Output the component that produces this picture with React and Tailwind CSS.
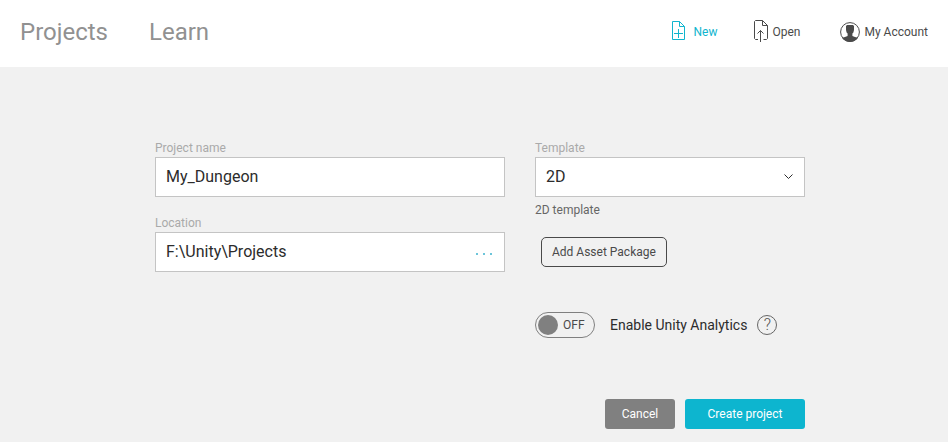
import { useState } from "react";

function NewIcon() {
  return (
    <svg width="15" height="21" viewBox="0 0 15 21" fill="none" stroke="currentColor" aria-hidden="true">
      <path d="M8.5 .5H1.5v18h12V5.500L8.500 .5v5h5M7.500 8v9M3 12.500h9" />
    </svg>
  );
}

function OpenIcon() {
  return (
    <svg width="15" height="23" viewBox="0 0 15 23" fill="none" stroke="currentColor" aria-hidden="true">
      <path d="M5 19.500H2.500L1.500 18.500V1.500L2.500 .5H9.500L14.500 5.500V18.500L13.500 19.500H10.500M9.500 .5V5.500H14.500M7.500 22V10.500M4.500 13.500L7.500 10.500L10.500 13.500" />
    </svg>
  );
}

function AccountIcon() {
  return (
    <svg width="20" height="20" viewBox="0 0 20 20" aria-hidden="true">
      <circle cx="10" cy="10" r="9.400" fill="none" stroke="currentColor" />
      <path
        fill="currentColor"
        d="M7 3h6l1 1v4l-.6 2.500-1 1V14l2.600 1 3 .8C16.500 18.300 13.500 20 10 20s-6.500-1.700-8-4.200l3-.8 2.600-1v-2.500l-1-1L6 8V4z"
      />
    </svg>
  );
}

function Field({ id, label, children }) {
  return (
    <div className="flex flex-col gap-px">
      <label htmlFor={id} className="text-xs text-[#aaaaaa]">
        {label}
      </label>
      {children}
    </div>
  );
}

export default function App() {
  const [name, setName] = useState("My_Dungeon");
  const [location, setLocation] = useState("F:\\Unity\\Projects");
  const [analytics, setAnalytics] = useState(false);

  return (
    <div className="flex min-h-screen flex-col bg-[#f1f1f1] font-['Roboto',sans-serif] text-[#4a4a4a]">
      <header className="flex h-[67px] items-center justify-between bg-white px-5 pb-1">
        <nav className="flex gap-[41px] text-2xl text-[#919191]">
          <a href="#projects">Projects</a>
          <a href="#learn">Learn</a>
        </nav>
        <div className="flex items-center text-xs">
          <button type="button" className="mr-9 flex items-center gap-2 text-[#11b5ce]">
            <NewIcon />
            New
          </button>
          <button type="button" className="mr-10 flex items-center gap-1">
            <OpenIcon />
            Open
          </button>
          <button type="button" className="flex items-center gap-1">
            <AccountIcon />
            My Account
          </button>
        </div>
      </header>

      <main className="flex grow justify-center pt-[73px] pl-3">
        <form className="w-[650px]" onSubmit={(e) => e.preventDefault()}>
          <div className="grid grid-cols-[350px_270px] gap-x-[30px]">
            <div className="flex flex-col gap-[18px]">
              <Field id="name" label="Project name">
                <input
                  id="name"
                  value={name}
                  onChange={(e) => setName(e.target.value)}
                  className="h-10 w-full border border-[#c4c4c4] bg-white px-2.5 pb-0.5 text-base text-[#2c2c2c]"
                />
              </Field>
              <Field id="location" label="Location">
                <div className="flex h-10 items-center border border-[#c4c4c4] bg-white">
                  <input
                    id="location"
                    value={location}
                    onChange={(e) => setLocation(e.target.value)}
                    className="h-full min-w-0 grow px-2.5 pb-0.5 text-base text-[#2c2c2c]"
                  />
                  <button type="button" aria-label="Browse" className="mr-3 flex gap-[5px] pt-1">
                    <span className="size-0.5 bg-[#6cc5da]" />
                    <span className="size-0.5 bg-[#6cc5da]" />
                    <span className="size-0.5 bg-[#6cc5da]" />
                  </button>
                </div>
              </Field>
            </div>

            <div className="flex flex-col items-start">
              <div className="w-full">
                <Field id="template" label="Template">
                  <div className="grid items-center">
                    <select
                      id="template"
                      className="col-start-1 row-start-1 h-10 w-full appearance-none border border-[#c4c4c4] bg-white px-2.5 text-base text-[#2c2c2c]"
                    >
                      <option>2D</option>
                    </select>
                    <svg
                      className="pointer-events-none col-start-1 row-start-1 mr-3 justify-self-end"
                      width="9"
                      height="6"
                      viewBox="0 0 9 6"
                      fill="none"
                      stroke="#2c2c2c"
                      aria-hidden="true"
                    >
                      <path d="M.5.500L4.500 4.500L8.500.500" />
                    </svg>
                  </div>
                </Field>
              </div>
              <p className="mt-[5px] text-xs text-[#666666]">2D template</p>
              <button
                type="button"
                className="mt-[19px] ml-1.5 h-[30px] rounded-[5px] border border-[#4a4a4a] px-2.5 text-xs"
              >
                Add Asset Package
              </button>
              <div className="mt-[45px] flex items-center">
                <label className="flex h-[26px] w-[60px] cursor-pointer items-center gap-[5px] rounded-full border border-[#808080] px-0.5 text-xs">
                  <input
                    type="checkbox"
                    aria-label="Enable Unity Analytics"
                    checked={analytics}
                    onChange={(e) => setAnalytics(e.target.checked)}
                    className="size-5 shrink-0 appearance-none rounded-full bg-[#808080]"
                  />
                  {analytics ? "ON" : "OFF"}
                </label>
                <span className="ml-[15px] text-sm text-[#2c2c2c]">Enable Unity Analytics</span>
                <button
                  type="button"
                  aria-label="Help"
                  className="ml-2.5 flex size-5 items-center justify-center rounded-full border border-[#666666] text-base font-light text-[#555555]"
                >
                  ?
                </button>
              </div>
            </div>
          </div>

          <div className="mt-[61px] flex justify-end gap-2.5 pb-3 text-xs text-white">
            <button type="button" className="h-[30px] w-[70px] rounded-[3px] bg-[#808080]">
              Cancel
            </button>
            <button type="submit" className="h-[30px] w-[120px] rounded-[3px] bg-[#0db5cf]">
              Create project
            </button>
          </div>
        </form>
      </main>
    </div>
  );
}
